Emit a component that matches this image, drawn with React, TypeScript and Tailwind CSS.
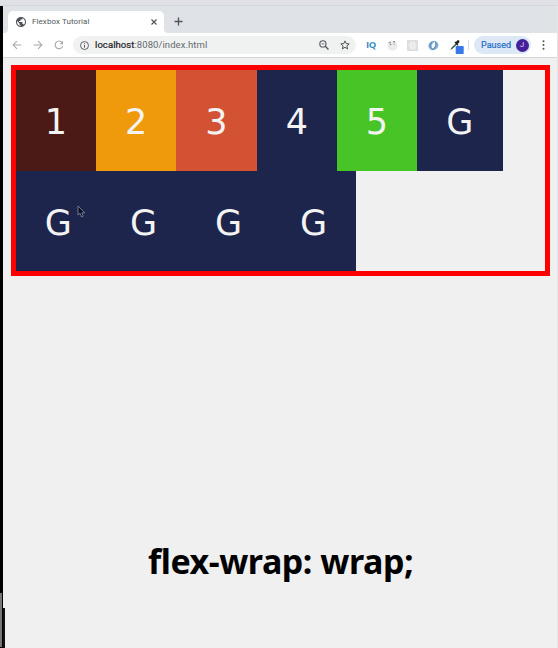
import React from "react";

const boxes = [
  { label: "1", color: "bg-[#4b1a17]", width: "w-[80.3px]" },
  { label: "2", color: "bg-[#ef9a0a]", width: "w-[80.2px]" },
  { label: "3", color: "bg-[#d35233]", width: "w-[80.4px]" },
  { label: "4", color: "bg-[#1d254c]", width: "w-[80.2px]" },
  { label: "5", color: "bg-[#47c426]", width: "w-[80.2px]" },
  { label: "G", color: "bg-[#1d254c]", width: "w-[85.3px]" },
  { label: "G", color: "bg-[#1d254c]", width: "w-[85.1px]" },
  { label: "G", color: "bg-[#1d254c]", width: "w-[85.1px]" },
  { label: "G", color: "bg-[#1d254c]", width: "w-[85.1px]" },
  { label: "G", color: "bg-[#1d254c]", width: "w-[85.1px]" },
];

function TabStrip() {
  return (
    <div className="flex h-[27px] items-end bg-[#dfe2e6] pl-[5px]">
      <div className="relative flex h-[22px] w-[156px] items-center rounded-t-[5px] bg-white pl-2">
        <svg className="absolute -left-1 bottom-0" width="4" height="4" viewBox="0 0 4 4">
          <path d="M4 0v4H0Q4 4 4 0Z" fill="#fff" />
        </svg>
        <svg className="absolute -right-1 bottom-0" width="4" height="4" viewBox="0 0 4 4">
          <path d="M0 0v4h4Q0 4 0 0Z" fill="#fff" />
        </svg>
        <svg width="10" height="10" viewBox="2 2 20 20" fill="#4d5156">
          <path d="M12 2C6.48 2 2 6.48 2 12s4.48 10 10 10 10-4.48 10-10S17.52 2 12 2zm-1 17.93c-3.95-.49-7-3.85-7-7.93 0-.62.08-1.21.21-1.79L9 15v1c0 1.1.9 2 2 2v1.93zm6.9-2.54c-.26-.81-1-1.39-1.9-1.39h-1v-3c0-.55-.45-1-1-1H8v-2h2c.55 0 1-.45 1-1V7h2c1.1 0 2-.9 2-2v-.41c2.93 1.19 5 4.06 5 7.41 0 2.08-.8 3.97-2.1 5.39z" />
        </svg>
        <span className="ml-[5px] w-[120px] whitespace-nowrap pl-px font-['Roboto',sans-serif] text-[8px] leading-none tracking-[0.08px] text-[#54585d]">
          Flexbox Tutorial
        </span>
        <svg width="6" height="6" viewBox="0 0 6 6" fill="none" stroke="#505358" strokeWidth="1.15">
          <path d="M.5.5l5 5M5.5.5l-5 5" />
        </svg>
      </div>
      <svg className="mb-[7px] ml-[10px]" width="9" height="9" viewBox="0 0 9 9" fill="none" stroke="#505459" strokeWidth="1.3">
        <path d="M4.5.5v8M.5 4.5h8" />
      </svg>
    </div>
  );
}

function Toolbar() {
  return (
    <div className="flex h-[25px] items-center border-b border-[#d6d7d8] bg-white pl-[9px]">
      <svg width="10" height="10" viewBox="0 0 10 10" fill="none" stroke="#a5a7aa" strokeWidth="1.05">
        <path d="M9.3 5H1.2M5 1.1L1.1 5 5 8.9" />
      </svg>
      <svg className="ml-[11px]" width="10" height="10" viewBox="0 0 10 10" fill="none" stroke="#a5a7aa" strokeWidth="1.05">
        <path d="M.7 5h8.1M5 1.1L8.9 5 5 8.9" />
      </svg>
      <svg className="ml-[11px]" width="10" height="10" viewBox="0 0 10 10" fill="none" stroke="#a5a7aa" strokeWidth="1.1">
        <path d="M8.7 6.3A3.9 3.9 0 1 1 8 2.3" />
        <path d="M9 .8v3.4H5.6Z" fill="#a5a7aa" stroke="none" />
      </svg>
      <div className="ml-[9px] flex h-[18px] w-[283px] items-center rounded-full bg-[#f0f2f2] pl-[7px]">
        <svg width="9" height="9" viewBox="0 0 9 9" fill="none" stroke="#595d62">
          <circle cx="4.5" cy="4.5" r="4" strokeWidth=".95" />
          <path d="M4.5 4v2.7M4.5 2.2v1" strokeWidth="1" />
        </svg>
        <span className="ml-[6px] w-[224px] whitespace-nowrap font-['Roboto',sans-serif] text-[9.5px] leading-none tracking-[0.07px] text-[#64686d]">
          <span className="text-[#202124] [-webkit-text-stroke:0.2px_#202124]">localhost</span>:8080/index.html
        </span>
        <svg className="shrink-0" width="10" height="10" viewBox="0 0 9 9" fill="none" stroke="#56595e">
          <circle cx="3.5" cy="3.5" r="2.8" strokeWidth="1" />
          <path d="M2.2 3.5h2.6" strokeWidth=".7" />
          <path d="M5.7 5.7l2.8 2.8" strokeWidth="1.2" />
        </svg>
        <svg className="ml-[11px] shrink-0" width="10" height="10" viewBox="0 0 10 10" fill="none" stroke="#4e5257" strokeWidth="1">
          <path d="M5 .9l1.2 2.7 3 .3-2.3 2 .7 3L5 7.3 2.4 8.9l.7-3-2.3-2 3-.3Z" />
        </svg>
      </div>
      <span className="ml-[10px] w-[11px] font-['Open_Sans',sans-serif] text-[9.5px] font-bold leading-none tracking-[-0.4px] text-[#388bc7]">
        IQ
      </span>
      <svg className="ml-[10px]" width="11" height="11" viewBox="0 0 11 11">
        <circle cx="5.5" cy="5.7" r="5" fill="#ebebeb" />
        <path d="M1.3 2.2l2-.8.8 1.2-2 1z" fill="#999" />
        <path d="M6.3 1l1.7.2v1.2l-1.5-.2z" fill="#777" />
        <circle cx="3.6" cy="4.5" r=".7" fill="#777" />
        <circle cx="7.1" cy="4.1" r=".6" fill="#888" />
      </svg>
      <svg className="ml-[9px]" width="11" height="11" viewBox="0 0 11 11" fill="none" stroke="#f8f8f8" strokeWidth=".65">
        <path d="M0 0h11v11H0Z" fill="#dedede" stroke="none" />
        <ellipse cx="5.5" cy="5.5" rx="4" ry="1.6" />
        <ellipse cx="5.5" cy="5.5" rx="4" ry="1.6" transform="rotate(60 5.5 5.5)" />
        <ellipse cx="5.5" cy="5.5" rx="4" ry="1.6" transform="rotate(120 5.5 5.5)" />
      </svg>
      <svg className="ml-[10px]" width="11" height="11" viewBox="0 0 11 11">
        <ellipse cx="5.4" cy="5.5" rx="5.1" ry="4.6" fill="#86add0" transform="rotate(-20 5.4 5.5)" />
        <path d="M4.3 8.7C2.7 6.1 3.8 3.1 7.4 1.5 8.4 4.8 7.3 7.5 4.3 8.7Z" fill="#f4f9fc" />
        <path d="M7.2 1.6C9.1 5 7 8.3 3.6 9.8" fill="none" stroke="#376f9d" strokeWidth=".8" />
        <path d="M3.8 2C1.8 4.1 2 7 3.7 8.6" fill="none" stroke="#477faf" strokeWidth=".8" />
      </svg>
      <svg className="ml-[10px] mt-[3px]" width="15" height="15" viewBox="0 0 15 15">
        <path d="M1.8 10.6l1-2.3 4-4.1 1.3 1.3-4.2 4Z" fill="#577a5c" />
        <path d="M1.8 10.6l5.7-5.8" stroke="#31533b" strokeWidth=".8" />
        <path d="M5.5 3.5l3.2 3.2.8-.8-.8-.9 1.6-1.8q.5-1.1-.3-1.8t-1.8 0L6.9 3l-.7-.5Z" fill="#202124" />
        <rect x="6.7" y="7" width="8" height="8" rx=".8" fill="#3879e7" />
      </svg>
      <div className="ml-[4px] h-[10px] w-px bg-[#dcdfe2]" />
      <div className="ml-[5px] flex h-[18px] w-[57px] shrink-0 items-center rounded-full bg-[#dde8f6] pl-[7px]">
        <span className="w-[34.5px] font-['Roboto',sans-serif] text-[9px] leading-none tracking-[0px] text-[#286bc6] [-webkit-text-stroke:0.2px_#286bc6]">Paused</span>
        <span className="flex size-[13px] items-center justify-center rounded-full bg-[#46209a] font-['Roboto',sans-serif] text-[7.5px] leading-none text-[#e5ddf5]">
          J
        </span>
      </div>
      <svg className="ml-[10.5px]" width="3" height="10" viewBox="0 0 3 10" fill="#53565a">
        <circle cx="1.5" cy="1.3" r="1" />
        <circle cx="1.5" cy="5" r="1" />
        <circle cx="1.5" cy="8.7" r="1" />
      </svg>
    </div>
  );
}

function FlexDemo() {
  return (
    <div className="ml-[8px] mt-[7px] flex h-[210.5px] w-[539.3px] flex-wrap content-start border-[5px] border-[#ff0000] font-['DejaVu_Sans',sans-serif] text-[35px] leading-none text-[#f3f3f3]">
      {boxes.map((box, index) => (
        <div key={index} className={`flex h-[100.5px] items-center justify-center pr-[0.4px] pt-[5px] ${box.width} ${box.color}`}>
          {box.label}
        </div>
      ))}
    </div>
  );
}

export default function App() {
  return (
    <div className="relative flex h-[648px] w-[558px] flex-col overflow-hidden bg-[#f0f0f0] font-['Noto_Sans',sans-serif]">
      <div className="h-[6px] border-b border-[#d5d8dd] bg-[#dfe1e6]" />
      <div className="flex min-h-0 flex-1">
        <div className="flex w-[3px] flex-col bg-black">
          <div className="mt-[587px] h-[54px] w-[2px] bg-[#777]" />
        </div>
        <main className="w-[555px]">
          <TabStrip />
          <Toolbar />
          <FlexDemo />
          <h1 className="ml-[145px] mt-[261px] whitespace-nowrap font-['Noto_Sans',sans-serif] text-[34px] font-bold leading-[48px] tracking-[-0.45px] text-black">
            flex-wrap: wrap;
          </h1>
        </main>
      </div>
      <div className="absolute left-[3px] top-[608px] h-[40px] w-[2px] bg-[#111]" />
      <div className="absolute right-0 top-[6px] h-[642px] w-px bg-[#e5e6e7]" />
      <svg className="absolute left-[77px] top-[205px]" width="9" height="14" viewBox="0 0 9 14">
        <path d="M1 1v9l2-1.8L4.5 12l1.8-.8L4.8 7.8h3Z" fill="#090f22" stroke="#9095a5" strokeWidth=".75" />
      </svg>
    </div>
  );
}
